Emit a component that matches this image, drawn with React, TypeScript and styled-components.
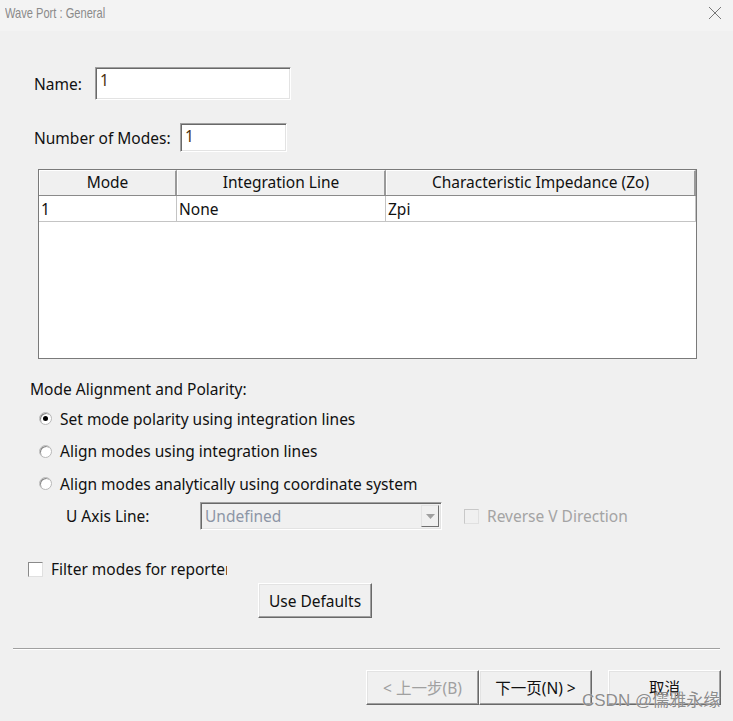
import React from "react";
import styled, { createGlobalStyle, css } from "styled-components";

const Global = createGlobalStyle`
  html, body { margin: 0; padding: 0; background: #f0f0f0; }
  body { font-family: "Noto Sans", "Noto Sans CJK SC", sans-serif; }
  * { box-sizing: border-box; }
`;

const FONT = `"Noto Sans", "Noto Sans CJK SC", sans-serif`;

const Window = styled.div`
  position: relative;
  width: 733px;
  height: 721px;
  background: #f0f0f0;
  overflow: hidden;
  font-family: ${FONT};
  font-size: 15.5px;
  line-height: 20px;
  color: #111;
`;

const TitleBar = styled.div`
  height: 31px;
  background: #f3f3f3;
  display: flex;
  align-items: center;
  justify-content: space-between;
  padding: 0 10px 5px 5px;
`;

const Title = styled.span`
  font-family: "Liberation Sans", sans-serif;
  font-size: 15px;
  color: #8a8a8a;
  display: inline-block;
  transform: scaleX(0.74);
  transform-origin: left center;
  white-space: nowrap;
`;

const CloseBtn = styled.span`
  display: flex;
  width: 16px;
  height: 16px;
`;

const Content = styled.div`
  display: flex;
  flex-direction: column;
`;

const FieldRow = styled.div<{ $top: number; $labelW: number }>`
  display: flex;
  align-items: center;
  margin-top: ${(p) => p.$top}px;
  padding-left: 34px;
  & > label {
    width: ${(p) => p.$labelW}px;
    flex: none;
  }
`;

const sunken = css`
  border-top: 1px solid #a0a0a0;
  border-left: 1px solid #a0a0a0;
  border-right: 1px solid #ffffff;
  border-bottom: 1px solid #ffffff;
  box-shadow: inset 1px 1px 0 #696969, inset -1px -1px 0 #e3e3e3;
`;

const TextBox = styled.div<{ $w: number; $h: number }>`
  ${sunken};
  width: ${(p) => p.$w}px;
  height: ${(p) => p.$h}px;
  background: #fff;
  padding: 2px 4px;
  font-size: 15.5px;
  line-height: 20px;
  color: #4a3010;
`;

const Table = styled.div`
  margin: 17px 0 0 38px;
  width: 659px;
  height: 190px;
  border: 1px solid #7a7a7a;
  background: #fff;
  display: flex;
  flex-direction: column;
`;

const Row = styled.div<{ $head?: boolean }>`
  display: grid;
  grid-template-columns: 138px 209px 1fr;
  height: 26px;
  background: ${(p) => (p.$head ? "#f0f0f0" : "#fff")};
  border-bottom: 1px solid ${(p) => (p.$head ? "#8a8a8a" : "#c4c4c4")};
`;

const HeadCell = styled.div`
  display: flex;
  align-items: center;
  justify-content: center;
  border-left: 1px solid #ffffff;
  border-top: 1px solid #ffffff;
  border-right: 2px solid #9a9a9a;
  line-height: 1;
`;

const Cell = styled.div`
  display: flex;
  align-items: center;
  padding-left: 2px;
  border-right: 1px solid #c4c4c4;
  color: #111;
`;

const SectionLabel = styled.div`
  margin: 20px 0 0 30px;
  height: 20px;
  line-height: 20px;
`;

const RadioList = styled.div`
  display: flex;
  flex-direction: column;
  gap: 11.5px;
  margin: 9px 0 0 39px;
`;

const RadioRow = styled.div`
  display: flex;
  align-items: center;
  height: 21px;
  gap: 8px;
`;

const RadioDot = styled.span<{ $on?: boolean }>`
  width: 13px;
  height: 13px;
  border-radius: 50%;
  background: #fff;
  border: 1px solid #b8b8b8;
  box-shadow: inset 1px 1px 0 #888;
  display: flex;
  align-items: center;
  justify-content: center;
  &::after {
    content: "";
    width: 5px;
    height: 5px;
    border-radius: 50%;
    background: ${(p) => (p.$on ? "#000" : "transparent")};
  }
`;

const AxisRow = styled.div`
  display: flex;
  align-items: center;
  margin: 8px 0 0 66px;
  height: 28px;
`;

const AxisLabel = styled.span`
  width: 134px;
`;

const Combo = styled.div`
  ${sunken};
  width: 242px;
  height: 28px;
  display: flex;
  align-items: center;
  justify-content: space-between;
  padding: 0 2px 0 4px;
  background: #f0f0f0;
  color: #8d96a6;
`;

const ComboBtn = styled.span`
  width: 18px;
  height: 22px;
  border-top: 1px solid #e3e3e3;
  border-left: 1px solid #e3e3e3;
  border-right: 1px solid #707070;
  border-bottom: 1px solid #707070;
  display: flex;
  align-items: center;
  justify-content: center;
`;

const Check = styled.span<{ $disabled?: boolean }>`
  width: 15px;
  height: 15px;
  flex: none;
  background: ${(p) => (p.$disabled ? "#f0f0f0" : "#fff")};
  border: 1px solid ${(p) => (p.$disabled ? "#c8c8c8" : "#8a8a8a")};
  border-right-color: #e0e0e0;
  border-bottom-color: #e0e0e0;
`;

const CheckRow = styled.label<{ $disabled?: boolean; $clip?: number }>`
  display: flex;
  align-items: center;
  gap: 8px;
  color: ${(p) => (p.$disabled ? "#a4a4a4" : "#111")};
  & > span:last-child {
    white-space: nowrap;
    overflow: hidden;
    ${(p) => (p.$clip ? `width: ${p.$clip}px;` : "")}
  }
`;

const ReverseWrap = styled.div`
  margin-left: 22px;
`;

const FilterRow = styled.div`
  margin: 29px 0 0 28px;
`;

const raised = css`
  border-top: 1px solid #ffffff;
  border-left: 1px solid #ffffff;
  border-right: 1px solid #696969;
  border-bottom: 1px solid #696969;
  box-shadow: inset -1px -1px 0 #a0a0a0, inset 1px 1px 0 #e3e3e3;
  background: #f0f0f0;
`;

const Button = styled.button<{ $w: number; $disabled?: boolean }>`
  ${raised};
  width: ${(p) => p.$w}px;
  height: 35px;
  font-family: ${FONT};
  font-size: 15.5px;
  color: ${(p) => (p.$disabled ? "#a0a0a0" : "#111")};
  padding: 0;
  display: flex;
  align-items: center;
  justify-content: center;
`;

const DefaultsRow = styled.div`
  margin: 4px 0 0 258px;
`;

const Separator = styled.div`
  margin: 30px 13px 0 13px;
  height: 2px;
  border-top: 1px solid #a0a0a0;
  border-bottom: 1px solid #ffffff;
`;

const Footer = styled.div`
  display: flex;
  margin: 20px 0 0 366px;
`;

const Spacer = styled.div`
  width: 16px;
`;

const Watermark = styled.div`
  position: absolute;
  left: 582px;
  top: 691px;
  font-size: 17px;
  color: rgba(110, 110, 110, 0.8);
  text-shadow: 0 0 1px #fff;
  font-family: "Liberation Sans", "Noto Sans CJK SC", sans-serif;
  white-space: nowrap;
`;

export default function App() {
  return (
    <Window>
      <Global />
      <TitleBar>
        <Title>Wave Port : General</Title>
        <CloseBtn>
          <svg width="16" height="16" viewBox="0 0 16 16">
            <path d="M2 2L14 14M14 2L2 14" stroke="#777" strokeWidth="1" fill="none" />
          </svg>
        </CloseBtn>
      </TitleBar>
      <Content>
        <FieldRow $top={36} $labelW={61}>
          <label>Name:</label>
          <TextBox $w={196} $h={33}>1</TextBox>
        </FieldRow>
        <FieldRow $top={23} $labelW={146}>
          <label>Number of Modes:</label>
          <TextBox $w={107} $h={29}>1</TextBox>
        </FieldRow>
        <Table>
          <Row $head>
            <HeadCell>Mode</HeadCell>
            <HeadCell>Integration Line</HeadCell>
            <HeadCell>Characteristic Impedance (Zo)</HeadCell>
          </Row>
          <Row>
            <Cell>1</Cell>
            <Cell>None</Cell>
            <Cell>Zpi</Cell>
          </Row>
        </Table>
        <SectionLabel>Mode Alignment and Polarity:</SectionLabel>
        <RadioList>
          <RadioRow>
            <RadioDot $on />
            <span>Set mode polarity using integration lines</span>
          </RadioRow>
          <RadioRow>
            <RadioDot />
            <span>Align modes using integration lines</span>
          </RadioRow>
          <RadioRow>
            <RadioDot />
            <span>Align modes analytically using coordinate system</span>
          </RadioRow>
        </RadioList>
        <AxisRow>
          <AxisLabel>U Axis Line:</AxisLabel>
          <Combo>
            <span>Undefined</span>
            <ComboBtn>
              <svg width="9" height="5" viewBox="0 0 9 5">
                <path d="M0 0H9L4.5 5Z" fill="#a0a0a0" />
              </svg>
            </ComboBtn>
          </Combo>
          <ReverseWrap>
            <CheckRow $disabled>
              <Check $disabled />
              <span>Reverse V Direction</span>
            </CheckRow>
          </ReverseWrap>
        </AxisRow>
        <FilterRow>
          <CheckRow $clip={176}>
            <Check />
            <span>Filter modes for reporter</span>
          </CheckRow>
        </FilterRow>
        <DefaultsRow>
          <Button $w={114}>Use Defaults</Button>
        </DefaultsRow>
        <Separator />
        <Footer>
          <Button $w={113} $disabled>&lt; 上一步(B)</Button>
          <Button $w={113}>下一页(N) &gt;</Button>
          <Spacer />
          <Button $w={113}>取消</Button>
        </Footer>
      </Content>
      <Watermark>CSDN @儒雅永缘</Watermark>
    </Window>
  );
}
